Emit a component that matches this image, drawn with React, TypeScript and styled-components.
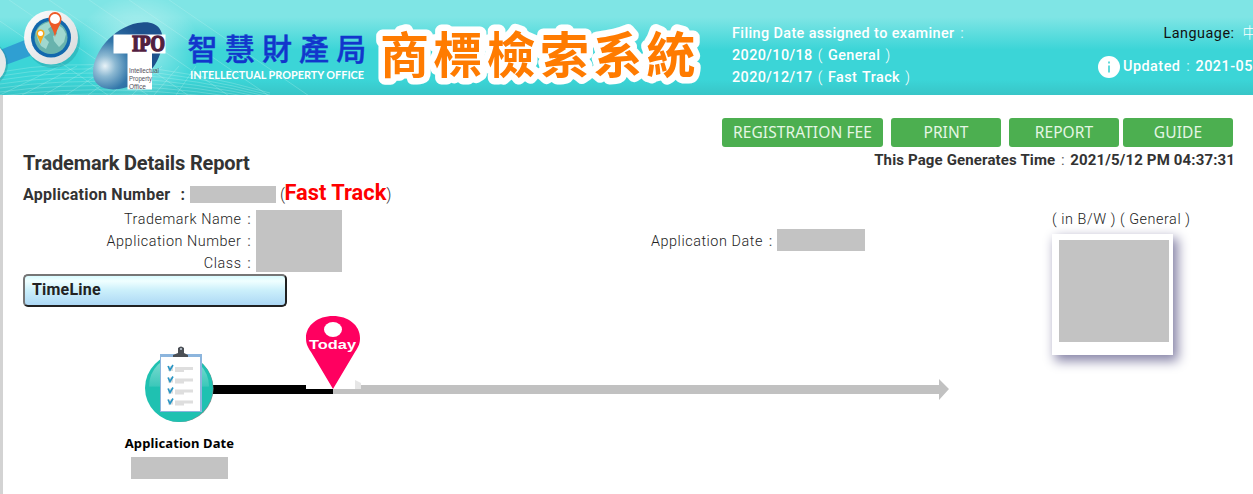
import React from "react";
import styled, { createGlobalStyle } from "styled-components";

const Global = createGlobalStyle`
  * { box-sizing: border-box; }
  html, body { margin: 0; padding: 0; overflow: hidden; background: #fff; }
  body { font-family: Roboto, "Noto Sans CJK TC", sans-serif; font-size: 15px; color: #333; }
`;

const Page = styled.div`
  width: 1253px;
  height: 494px;
  overflow: hidden;
  display: flex;
  flex-direction: column;
`;

const Banner = styled.header`
  height: 95px;
  flex: none;
  display: flex;
  overflow: hidden;
  color: #fff;
  white-space: nowrap;
  background: linear-gradient(#7fe5e5 0, #7fe5e5 17px, #3bd5d7 50px, #3bd5d7 80px, #38c5c7 95px);
`;

const BrandArt = styled.svg`
  flex: none;
  display: block;
`;

const FilingDates = styled.div`
  width: 366px;
  flex: none;
  padding: 23px 0 0 22px;
  font-weight: 500;
  font-size: 14.4px;
  line-height: 22px;
  letter-spacing: 0.4px;
`;

const DateLine = styled.div`
  word-spacing: 1.2px;
`;

const HeaderSide = styled.div`
  width: 177px;
  flex: none;
  padding: 23px 0 0 22px;
  font-size: 14.4px;
  letter-spacing: 0.5px;
`;

const Language = styled.div`
  height: 22px;
  line-height: 22px;
  padding-left: 65.5px;
  color: #111;
`;

const LanguageLink = styled.span`
  margin-left: 8px;
  color: #fff;
  font-weight: 300;
`;

const Updated = styled.div`
  display: flex;
  align-items: flex-start;
  height: 22px;
  line-height: 21px;
  margin-top: 11px;
  gap: 3px;
  font-weight: 500;
  svg { flex: none; }
`;

const Colon = styled.span`
  display: inline-block;
  width: 15px;
  text-align: center;
  letter-spacing: 0;
  font-weight: 400;
  opacity: 0.8;
`;

const Main = styled.main`
  flex: 1;
  border-left: 3px solid #d3d3d3;
  padding: 23px 0 0 20px;
`;

const Toolbar = styled.nav`
  display: flex;
  justify-content: flex-end;
  padding-right: 20px;
  height: 29px;
`;

const ToolButton = styled.button<{ $w?: number; $gap?: number }>`
  width: ${(p) => p.$w ?? 110}px;
  height: 29px;
  margin: 0 0 0 ${(p) => p.$gap ?? 8}px;
  padding: 0;
  border: 0;
  border-radius: 3px;
  background: #4caf50;
  color: #e4f6e4;
  font: 15.5px/29px "Noto Sans", sans-serif;
  letter-spacing: 0.1px;
  white-space: nowrap;
`;

const TitleRow = styled.div`
  display: flex;
  justify-content: space-between;
  padding-right: 18px;
  height: 34px;
`;

const Title = styled.h1`
  margin: 0;
  font-size: 20px;
  font-weight: 700;
  line-height: 33px;
  letter-spacing: -0.15px;
`;

const Generated = styled.div`
  font-size: 15px;
  font-weight: 700;
  line-height: 26px;
  letter-spacing: 0.14px;
`;

const NumberRow = styled.div`
  display: flex;
  align-items: center;
  height: 26px;
  font-size: 16px;
  white-space: pre;
`;

const NumberLabel = styled.span`
  display: flex;
  width: 167px;
  gap: 10px;
  font-weight: 700;
  letter-spacing: 0.24px;
`;

const FastTrack = styled.strong`
  color: #f00;
  font-size: 21.8px;
  font-weight: 700;
  line-height: 22px;
  padding-bottom: 2px;
  margin-left: -0.5px;
`;

const Thin = styled.span`
  font-weight: 300;
`;

const Masked = styled.div<{ $w: number; $h: number }>`
  flex: none;
  width: ${(p) => p.$w}px;
  height: ${(p) => p.$h}px;
  background: #c3c3c3;
`;

const Details = styled.section`
  display: flex;
  height: 67px;
  padding-top: 1px;
  font-size: 14.4px;
  line-height: 22px;
  letter-spacing: 0.55px;
  color: #222;
  font-weight: 350;
`;

const Labels = styled.div`
  width: 233.5px;
  padding-top: 1px;
  text-align: right;
`;

const Values = styled.div`
  width: 394.5px;
  padding-top: 2px;
  padding-left: 0;
  display: flex;
  margin-left: -0.5px;
  padding-left: 0;
  box-sizing: content-box;
`;

const DateField = styled.div`
  display: flex;
  width: 401px;
  padding-top: 21px;
  margin-left: 0.5px;
`;

const DateLabel = styled.span`
  width: 126px;
  padding-top: 2px;
  white-space: nowrap;
`;

const Specimen = styled.figure`
  margin: 0;
  padding-top: 1px;
  white-space: nowrap;
`;

const Frame = styled.div`
  width: 121px;
  height: 121px;
  margin-top: 3px;
  padding: 6px 0 0 7px;
  background: #fff;
  box-shadow: 4px 5px 11px 1px #8885a8;
`;

const TimelineButton = styled.button`
  display: block;
  width: 264px;
  height: 33px;
  padding: 0 7px 1px;
  border: 2px solid;
  border-color: #767676 #212121 #212121 #767676;
  border-radius: 5px;
  background: linear-gradient(#d9fbff 0, #f0ffff 5px, #ccf0fb 14px, #add8f5 100%);
  color: #222;
  text-align: left;
  font: 700 16px/24px Roboto, sans-serif;
  letter-spacing: 0.2px;
`;

const Track = styled.svg`
  display: block;
`;

const Milestone = styled.div`
  display: flex;
  flex-direction: column;
  align-items: center;
  width: 131px;
  margin-left: 91px;
  font: 700 13px/20px "Noto Sans", sans-serif;
  letter-spacing: 0.1px;
  color: #000;
  gap: 4px;
`;

const sweepLines = Array.from({ length: 9 }, (_, i) => i);
const checkRows = [366, 377.5, 388.5, 399.5];

function Brand() {
  return (
    <BrandArt width="710" height="95" viewBox="0 0 710 95">
      <defs>
        <radialGradient id="glow">
          <stop offset="0" stopColor="#fff" stopOpacity=".55" />
          <stop offset="1" stopColor="#fff" stopOpacity="0" />
        </radialGradient>
        <radialGradient id="egg" gradientUnits="userSpaceOnUse" cx="105" cy="66" r="48">
          <stop offset="0" stopColor="#e9f3f8" />
          <stop offset=".22" stopColor="#8bb8d2" />
          <stop offset=".52" stopColor="#3377aa" />
          <stop offset="1" stopColor="#1d518d" />
        </radialGradient>
        <linearGradient id="ring" x2="1" y2="1">
          <stop offset="0" stopColor="#fff" />
          <stop offset="1" stopColor="#d5d8da" />
        </linearGradient>
      </defs>
      <g fill="none" stroke="#c5f5f2" strokeOpacity=".28">
        {sweepLines.slice(0, 6).map((i) => (
          <path key={i} d={`M${-60 + i * 40} -20L${115 + i * 40} 100`} />
        ))}
        {sweepLines.map((i) => (
          <path key={i} d={`M0 ${72 + i * 4}Q120 ${50 + i * 5} 270 ${93 + i * 2}`} />
        ))}
        {sweepLines.map((i) => (
          <path key={i} d={`M${i * 22} 95L${60 + i * 17} 66`} />
        ))}
      </g>
      <ellipse cx="138" cy="48" rx="62" ry="54" fill="url(#glow)" />
      <path d="M0 50L30 38V56L0 67Z" fill="#2f9fd2" />
      <circle cx="-15" cy="64" r="23" fill="#258e99" opacity=".4" />
      <circle cx="-16" cy="63" r="22" fill="#e6e9e9" />
      <circle cx="53" cy="41" r="27" fill="#16858d" opacity=".3" />
      <circle cx="51" cy="37.500" r="27" fill="url(#ring)" />
      <circle cx="51" cy="37.500" r="20" fill="#1268ad" />
      <circle cx="51" cy="37.500" r="16.500" fill="#68b3ad" />
      <path d="M36 32Q40 24 49 22L53 25L48 29L50 33L44 37L49 42L46 49L41 46L38 40ZM55 24Q63 26 66 34L64 42L59 47L54 41L53 36L57 34Z" fill="#a0d8cf" />
      <path d="M40.500 44C39 38 36.500 36 36.500 33.500A4 4 0 0 1 44.500 33.500C44.500 36 42 38 40.500 44Z" fill="#f5a81a" />
      <circle cx="40.500" cy="33.500" r="2.500" fill="#fff" />
      <path d="M55 37C53 28 48.500 24 48.500 18.500A6.500 6.500 0 0 1 61.500 18.500C61.500 24 57 28 55 37Z" fill="#ed5a27" />
      <circle cx="55" cy="19" r="5" fill="#fff" />
      <path d="M93 73C93 49 118 24 142 22.500C158 21 165 31 162 46C159 67 140 86 119 89C103 91 93 85 93 73Z" fill="url(#egg)" />
      <path d="M113.500 34.500H165.500V53.500H152V89.500H127.500V53.500H113.500Z" fill="#fff" />
      <text x="132" y="51.300" fill="#51203f" stroke="#51203f" strokeWidth="1.500" fontFamily="Liberation Serif" fontWeight="700" fontSize="22.500" textLength="33" lengthAdjust="spacingAndGlyphs">IPO</text>
      <g fill="#52515b" fontFamily="Liberation Sans" fontSize="7">
        <text x="129" y="72.500" textLength="30" lengthAdjust="spacingAndGlyphs">Intellectual</text>
        <text x="129" y="81" textLength="23" lengthAdjust="spacingAndGlyphs">Property</text>
        <text x="129" y="89" textLength="17" lengthAdjust="spacingAndGlyphs">Office</text>
      </g>
      <text x="187.500" y="60" fill="#1236cc" stroke="#1236cc" strokeWidth=".4" fontFamily="Noto Sans CJK TC" fontWeight="500" fontSize="30" letterSpacing="7.200">智慧財產局</text>
      <text x="190" y="79" fill="#fff" fontFamily="Lato" fontWeight="700" fontSize="12" textLength="174" lengthAdjust="spacingAndGlyphs">INTELLECTUAL PROPERTY OFFICE</text>
      <text x="380" y="72.500" fill="#ff7b00" stroke="#fff" strokeWidth="13" strokeLinejoin="round" paintOrder="stroke" fontFamily="Noto Sans CJK TC" fontWeight="700" fontSize="49" letterSpacing="4.300">商標檢索系統</text>
    </BrandArt>
  );
}

function Timeline() {
  return (
    <Track width="940" height="126" viewBox="23 307 940 126">
      <defs>
        <linearGradient id="disc" x2="0" y2="1">
          <stop offset="0" stopColor="#8adfd5" />
          <stop offset=".5" stopColor="#3cc8ba" />
          <stop offset=".52" stopColor="#1fc1b1" />
        </linearGradient>
      </defs>
      <path d="M333 385H939V379L949 389L939 400V394H333Z" fill="#c1c1c1" />
      <path d="M200 385H333V394H200Z" fill="#000" />
      <path d="M306 380H361V389H306Z" fill="#fff" />
      <path d="M355 380L361 383V389H355Z" fill="#e6e6e6" />
      <circle cx="180" cy="388.500" r="33.500" fill="#8a8a8a" />
      <circle cx="179" cy="388" r="34" fill="#1fc1b1" />
      <circle cx="179" cy="386" r="30" fill="url(#disc)" />
      <path d="M160 354H202V412H160Z" fill="#8cb5dd" />
      <path d="M161 357H200V411H161Z" fill="#fff" />
      <path d="M173 357V355L178 353V348Q181 345 184 348V353L188 355V357Z" fill="#4b4f55" />
      <circle cx="181" cy="349" r="1" fill="#c6d0dc" />
      {checkRows.map((y) => (
        <g key={y}>
          <path d={`M168 ${y}h5v5h-5ZM175 ${y + 1}h18v3h-18ZM175 ${y + 4}h9v2h-9Z`} fill="#dedede" />
          <path d={`M168 ${y}L170 ${y + 4}L173 ${y - 1}`} fill="none" stroke="#2595c5" strokeWidth="1.600" />
        </g>
      ))}
      <path d="M333 389L311 352C307 346 306 343 306 338C306 325 318 316 333 316S360 325 360 338C360 343 359 346 355 352Z" fill="#ff0060" />
      <ellipse cx="333" cy="329.500" rx="9" ry="7.500" fill="#fff" />
      <text x="309" y="349" fill="#fff" fontFamily="Liberation Sans" fontWeight="700" fontSize="12.500" textLength="47" lengthAdjust="spacingAndGlyphs">Today</text>
    </Track>
  );
}

export default function App() {
  return (
    <Page>
      <Global />
      <Banner>
        <Brand />
        <FilingDates>
          <div>Filing Date assigned to examiner<Colon>:</Colon></div>
          <DateLine>2020/10/18 <Thin>(</Thin> General <Thin>)</Thin></DateLine>
          <DateLine>2020/12/17 <Thin>(</Thin> Fast Track <Thin>)</Thin></DateLine>
        </FilingDates>
        <HeaderSide>
          <Language>
            Language:
            <LanguageLink>中文</LanguageLink>
          </Language>
          <Updated>
            <svg width="22" height="22" viewBox="0 0 22 22">
              <circle cx="11" cy="11" r="11" fill="#fff" />
              <path d="M10 5.500h2v2h-2ZM10 9.500h2v7h-2Z" fill="#62dadb" />
            </svg>
            <span>Updated<Colon>:</Colon>2021-05-12</span>
          </Updated>
        </HeaderSide>
      </Banner>
      <Main>
        <Toolbar>
          <ToolButton $w={161}>REGISTRATION FEE</ToolButton>
          <ToolButton>PRINT</ToolButton>
          <ToolButton>REPORT</ToolButton>
          <ToolButton $gap={4}>GUIDE</ToolButton>
        </Toolbar>
        <TitleRow>
          <Title>Trademark Details Report</Title>
          <Generated>This Page Generates Time<Colon>:</Colon>2021/5/12 PM 04:37:31</Generated>
        </TitleRow>
        <NumberRow>
          <NumberLabel>
            <span>Application Number</span>
            <span>:</span>
          </NumberLabel>
          <Masked $w={86} $h={17} />
          <Thin> (</Thin>
          <FastTrack>Fast Track</FastTrack>
          <Thin>)</Thin>
        </NumberRow>
        <Details>
          <Labels>
            <div>Trademark Name<Colon>:</Colon></div>
            <div>Application Number<Colon>:</Colon></div>
            <div>Class<Colon>:</Colon></div>
          </Labels>
          <Values>
            <Masked $w={86} $h={62} />
          </Values>
          <DateField>
            <DateLabel>Application Date<Colon>:</Colon></DateLabel>
            <Masked $w={88} $h={22} />
          </DateField>
          <Specimen>
            <figcaption>( in B/W ) ( General )</figcaption>
            <Frame>
              <Masked $w={110} $h={102} />
            </Frame>
          </Specimen>
        </Details>
        <TimelineButton>TimeLine</TimelineButton>
        <Timeline />
        <Milestone>
          Application Date
          <Masked $w={97} $h={22} />
        </Milestone>
      </Main>
    </Page>
  );
}
